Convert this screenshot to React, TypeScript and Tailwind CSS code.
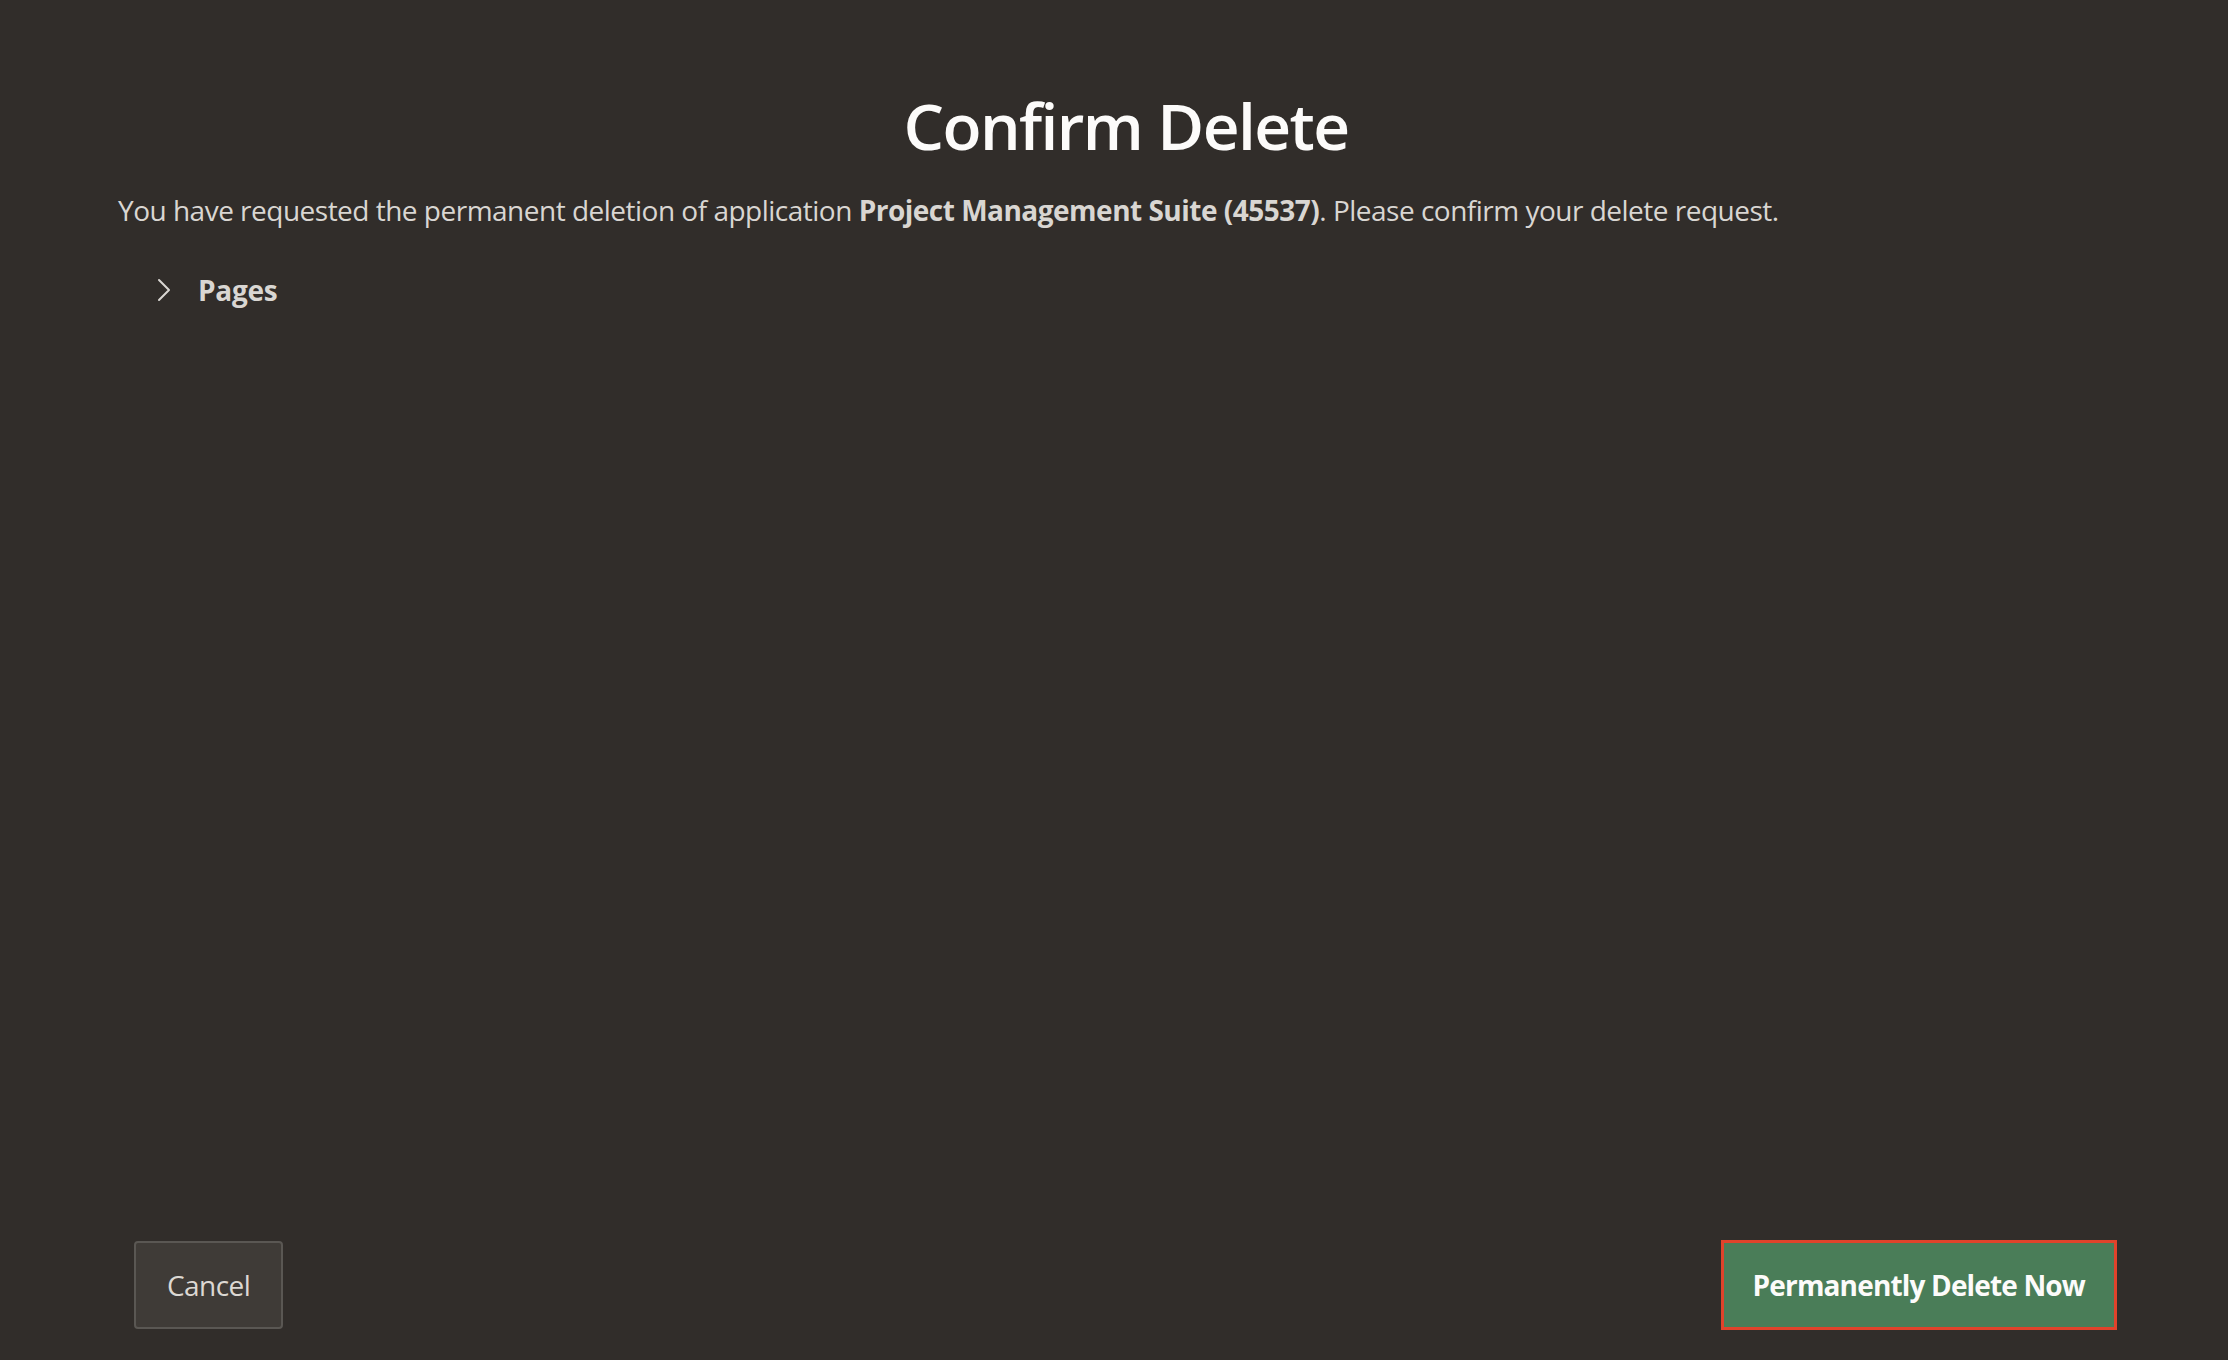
import React from "react";

export default function App() {
  return (
    <div
      className="h-[1360px] w-full bg-[#312d2a] flex flex-col text-[#d9d6d2]"
      style={{ fontFamily: '"Open Sans", "Noto Sans", sans-serif' }}
    >
      <div className="flex-1 flex flex-col pl-[118px] pr-[94px] pt-[82px]">
        <h1 className="text-center text-[64px] leading-[88px] font-semibold text-[#fcfbfa] tracking-[-0.025em]">
          Confirm Delete
        </h1>
        <p className="mt-[20px] text-[28px] leading-[40px] tracking-[-0.018em]">
          You have requested the permanent deletion of application{" "}
          <b className="font-bold">Project Management Suite (45537)</b>. Please confirm your delete request.
        </p>
        <div className="mt-[40px] ml-[38px] flex items-center gap-[26px]">
          <svg width="16" height="26" viewBox="0 0 16 26" fill="none">
            <path d="M3 3 L13 13 L3 23" stroke="#d9d6d2" strokeWidth="2" strokeLinecap="round" strokeLinejoin="round" />
          </svg>
          <span className="text-[28px] leading-[40px] font-bold tracking-[-0.01em]">Pages</span>
        </div>
      </div>
      <div className="flex items-center justify-between pl-[134px] pr-[111px] pb-[30px]">
        <button className="h-[88px] px-[31px] rounded-[4px] border-2 border-[#5a5753] bg-[#3f3b37] text-[28px] text-[#dcd8d3] tracking-[-0.02em]">
          Cancel
        </button>
        <button className="h-[90px] px-[29px] border-[3px] border-[#e0432b] bg-[#4a7d58] text-[28px] font-bold text-[#fcfbfa] tracking-[-0.03em]">
          Permanently Delete Now
        </button>
      </div>
    </div>
  );
}
